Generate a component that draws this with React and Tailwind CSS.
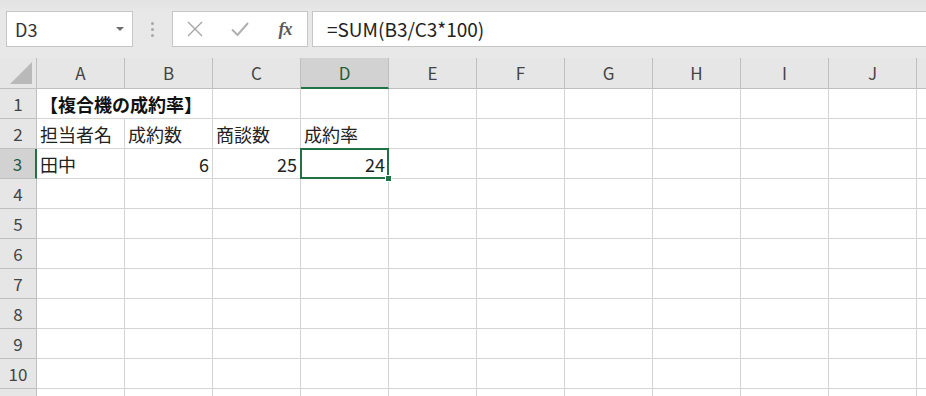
const COLS = ['A', 'B', 'C', 'D', 'E', 'F', 'G', 'H', 'I', 'J', 'K'];
const ROWS = [1, 2, 3, 4, 5, 6, 7, 8, 9, 10, 11];

const data = {
  2: { A: '担当者名', B: '成約数', C: '商談数', D: '成約率' },
  3: { A: '田中', B: '6', C: '25', D: '24' },
};
const numeric = { B: true, C: true, D: true };

const font = { fontFamily: '"Noto Sans CJK JP", "Noto Sans", sans-serif' };

function TopBar() {
  return (
    <div className="h-[58px] bg-gradient-to-b from-[#e2e2e2] to-[#e8e8e8] to-[20%] flex items-start pt-[11px] pl-[6px]">
      <div className="w-[127px] h-[36px] bg-white border border-[#c6c6c6] flex items-center justify-between pl-[8px] pr-[8px]">
        <span className="text-[18px] text-[#333]">D3</span>
        <svg width="8" height="5" viewBox="0 0 8 5"><path d="M0 0h8L4 4z" fill="#6d6d6d" /></svg>
      </div>
      <div className="w-[39px] h-[36px] flex flex-col items-center justify-center gap-[3px]">
        <span className="w-[3px] h-[3px] bg-[#a8a8a8] rounded-full" />
        <span className="w-[3px] h-[3px] bg-[#a8a8a8] rounded-full" />
        <span className="w-[3px] h-[3px] bg-[#a8a8a8] rounded-full" />
      </div>
      <div className="w-[136px] h-[36px] bg-white border border-[#c6c6c6] flex items-center">
        <div className="w-[44px] flex justify-center">
          <svg width="16" height="16" viewBox="0 0 16 16"><path d="M1 1L15 15M15 1L1 15" stroke="#a6a6a6" strokeWidth="1.4" /></svg>
        </div>
        <div className="w-[46px] flex justify-center">
          <svg width="18" height="14" viewBox="0 0 18 14"><path d="M1 7.5L6.5 13L17 1" stroke="#b0b0b0" strokeWidth="2" fill="none" /></svg>
        </div>
        <div className="w-[44px] flex justify-center">
          <span className="italic text-[18px] text-[#5a5a5a] font-bold tracking-[-1px]" style={{ fontFamily: '"Liberation Serif", serif' }}>fx</span>
        </div>
      </div>
      <div className="ml-[4px] flex-1 h-[36px] bg-white border border-[#c6c6c6] border-r-0 flex items-center pl-[14px]">
        <span className="text-[19px] text-[#222]">=SUM(B3/C3*100)</span>
      </div>
    </div>
  );
}

export default function App() {
  return (
    <div className="w-[926px] h-[396px] overflow-hidden bg-white" style={font}>
      <TopBar />
      <div className="grid grid-cols-[37px_repeat(11,88px)] grid-rows-[31px_repeat(11,30px)]">
        <div className="bg-[#e6e6e6] border-r border-b border-[#bfbfbf] flex items-end justify-end p-[4px]">
          <svg width="22" height="22" viewBox="0 0 22 22"><path d="M22 0V22H0z" fill="#b9b9b9" /></svg>
        </div>
        {COLS.map(c => (
          <div
            key={c}
            className={`flex items-center justify-center text-[17px] ${c === 'D' ? 'bg-[#d2d2d2] text-[#1e5c3a] border-b-2 border-b-[#217346] border-r border-r-[#bfbfbf]' : 'bg-[#e6e6e6] text-[#444] border-r border-b border-[#bfbfbf]'}`}
          >
            {c === 'K' ? '' : c}
          </div>
        ))}
        {ROWS.map(r => (
          <Row key={r} r={r} />
        ))}
      </div>
    </div>
  );
}

function Row({ r }) {
  const sel = r === 3;
  return (
    <>
      <div
        className={`flex items-center justify-center text-[17px] border-b border-[#bfbfbf] ${sel ? 'bg-[#d2d2d2] text-[#1e5c3a] border-r-2 border-r-[#217346]' : 'bg-[#e6e6e6] text-[#444] border-r border-r-[#bfbfbf]'}`}
      >
        {r < 11 ? r : ''}
      </div>
      {r === 1 ? (
        <>
          <div className="col-span-2 border-r border-b border-[#d4d4d4] flex items-center pl-[3px] pt-[2px] text-[18px] font-bold text-[#111] whitespace-nowrap">
            【複合機の成約率】
          </div>
          {COLS.slice(2).map(c => <div key={c} className="border-r border-b border-[#d4d4d4]" />)}
        </>
      ) : (
        COLS.map(c => {
          const v = data[r]?.[c];
          const isSel = sel && c === 'D';
          return (
            <div
              key={c}
              className={`relative border-r border-b border-[#d4d4d4] flex items-center pt-[2px] text-[18px] text-[#222] whitespace-nowrap ${r === 3 && numeric[c] ? 'justify-end pr-[3px]' : 'pl-[3px]'} ${isSel ? 'z-10' : ''}`}
            >
              {v}
              {isSel && (
                <>
                  <div className="absolute left-[-1px] top-[-1px] right-[-1px] bottom-[-1px] border-2 border-[#217346]" />
                  <div className="absolute right-[-4px] bottom-[-4px] w-[7px] h-[7px] bg-[#217346] border border-white" />
                </>
              )}
            </div>
          );
        })
      )}
    </>
  );
}
